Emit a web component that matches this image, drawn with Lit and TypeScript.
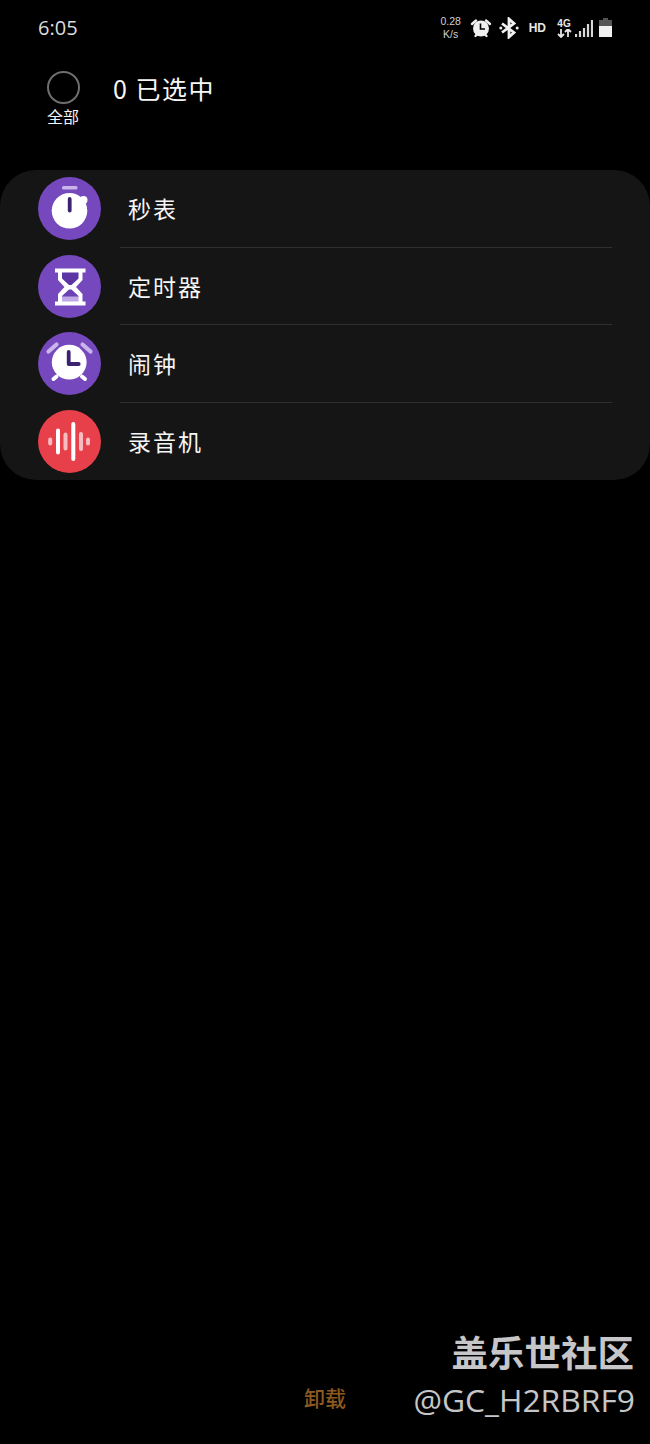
import { LitElement, html, css, svg } from 'lit';
import { customElement } from 'lit/decorators.js';

const PURPLE = '#7548bd';
const RED = '#e8404a';

const stopwatch = svg`
  <circle cx="31.5" cy="31.5" r="31.5" fill="${PURPLE}"/>
  <rect x="24" y="9" width="15.5" height="3.4" rx="1.5" fill="#c9b5ea"/>
  <circle cx="45.5" cy="23" r="4" fill="#fff"/>
  <circle cx="31.5" cy="33.8" r="17.8" fill="#fff"/>
  <rect x="29.8" y="20" width="3.8" height="15.5" rx="1.9" fill="#3c2370"/>`;

const hourglass = svg`
  <circle cx="31.5" cy="31.5" r="31.5" fill="${PURPLE}"/>
  <rect x="17" y="13.500" width="30.5" height="4" fill="#fff"/>
  <rect x="17" y="46.500" width="30.5" height="4" fill="#fff"/>
  <path d="M20 16h24.500v9L38 32l6.500 7v9H20v-9l6.500-7L20 25z" fill="#fff"/>
  <path d="M24 17.500h16.500v6L33.500 30h-2.500L24 23.500z" fill="#5a35a3"/>
  <path d="M31 34.500h2.500l7 6.500v1H24v-1z" fill="#6a42b3"/>
  <rect x="24" y="41.500" width="16.500" height="5" fill="#bfa9e6"/>`;

const alarm = svg`
  <circle cx="31.5" cy="31.5" r="31.5" fill="${PURPLE}"/>
  <path d="M10.500 19.500l8-7M44.500 12.500l8 7" stroke="#c9b5ea" stroke-width="4.200" stroke-linecap="round" fill="none"/>
  <path d="M18.500 44.500l-3 2.500M44 44.500l3 2.500" stroke="#fff" stroke-width="4" stroke-linecap="round" fill="none"/>
  <circle cx="31.200" cy="30.200" r="17.400" fill="#fff"/>
  <path d="M30.700 20v12h10" stroke="#3c2370" stroke-width="3.800" stroke-linecap="round" stroke-linejoin="round" fill="none"/>`;

const recorder = svg`
  <circle cx="31.5" cy="31.5" r="31.5" fill="${RED}"/>
  <g stroke-width="4" stroke-linecap="round" fill="none">
    <path d="M12.200 29.500v4M50 29.500v4M27.500 24.500v14M43 24v15" stroke="#f7bcc0"/>
    <path d="M20 20.500v22M35.300 14v35" stroke="#fff"/>
  </g>`;

const ITEMS = [
  { name: '秒表', icon: stopwatch },
  { name: '定时器', icon: hourglass },
  { name: '闹钟', icon: alarm },
  { name: '录音机', icon: recorder },
];

@customElement('app-root')
export class AppRoot extends LitElement {
  static styles = css`
    :host {
      display: flex;
      flex-direction: column;
      position: relative;
      height: 1444px;
      overflow: hidden;
      background: #000;
      color: #f6f6f6;
      font-family: 'Noto Sans CJK SC', 'Noto Sans', sans-serif;
    }

    .status {
      display: flex;
      align-items: center;
      justify-content: space-between;
      height: 55px;
      padding: 0 38px;
      flex: none;
    }

    .time {
      font-family: 'Open Sans', sans-serif;
      font-size: 20px;
      color: #dcdcdc;
    }

    .indicators {
      display: flex;
      align-items: center;
      color: #e6e6e6;
    }

    .speed {
      display: flex;
      flex-direction: column;
      align-items: center;
      width: 24px;
      font-family: 'Liberation Sans', sans-serif;
      font-size: 10.5px;
      line-height: 12.500px;
      color: #cfcfcf;
    }

    .indicators svg {
      display: block;
      flex: none;
    }

    .hd {
      margin: 0 10px 0 10px;
      font-family: 'Liberation Sans', sans-serif;
      font-size: 12px;
      font-weight: 700;
    }

    .net {
      display: flex;
      flex-direction: column;
      align-items: center;
      width: 16px;
      font-family: 'Liberation Sans', sans-serif;
      font-size: 10px;
      font-weight: 700;
      line-height: 11px;
    }

    .header {
      display: flex;
      height: 115px;
      flex: none;
      padding-left: 46px;
      gap: 33px;
    }

    .all {
      display: flex;
      flex-direction: column;
      align-items: center;
      width: 34px;
      padding-top: 16px;
    }

    .check {
      box-sizing: border-box;
      width: 33px;
      height: 33px;
      border: 2px solid #6e6e6e;
      border-radius: 50%;
    }

    .all span {
      margin-top: 1px;
      font-size: 16px;
      line-height: 22px;
      font-weight: 400;
      white-space: nowrap;
    }

    .title {
      margin-top: 15px;
      font-size: 25px;
      line-height: 36px;
      font-weight: 400;
      letter-spacing: 1.5px;
    }

    .card {
      display: flex;
      flex-direction: column;
      height: 310px;
      flex: none;
      background: #151515;
      border-radius: 36px;
    }

    .row {
      display: flex;
      align-items: center;
      flex: 1;
      padding-left: 38px;
    }

    .row svg {
      display: block;
      flex: none;
      width: 63px;
      height: 63px;
    }

    .label {
      display: flex;
      align-items: center;
      box-sizing: border-box;
      height: 100%;
      flex: 1;
      margin: 0 38px 0 19px;
      padding-left: 8px;
      border-bottom: 1px solid #2f2f2f;
      font-size: 23px;
      font-weight: 400;
      letter-spacing: 2px;
    }

    .row:last-child .label {
      border-bottom: none;
    }

    .actions {
      display: flex;
      justify-content: center;
      margin-top: auto;
      padding-bottom: 31px;
    }

    .actions span {
      font-size: 21px;
      line-height: 32px;
      color: #8c5a20;
      font-weight: 500;
    }

    .watermark {
      position: absolute;
      right: 15px;
      bottom: 22px;
      text-align: right;
      color: #c6c6c8;
    }

    .brand {
      font-size: 36.5px;
      line-height: 52px;
      font-weight: 700;
      margin-right: 1px;
    }

    .handle {
      font-family: 'Open Sans', sans-serif;
      font-size: 31.8px;
      line-height: 44px;
    }
  `;

  render() {
    return html`
      <div class="status">
        <span class="time">6:05</span>
        <div class="indicators">
          <div class="speed"><span>0.28</span><span>K/s</span></div>
          <svg style="margin-left:7px" width="22" height="22" viewBox="0 0 22 22">
            <path d="M2 7l4-3.500M16 3.500L20 7M5.500 19l2-2M16.500 19l-2-2" stroke="#f0f0f0" stroke-width="2.400" stroke-linecap="round"/>
            <circle cx="11" cy="11.500" r="8" fill="#f0f0f0"/>
            <path d="M10.500 6.500v5.500h4.500" stroke="#000" stroke-width="1.600" fill="none"/>
          </svg>
          <svg style="margin-left:7px" width="20" height="22" viewBox="0 0 20 22">
            <path d="M3 6.500L15 15.500 10 20V2l5 4.500L3 15.500" stroke="#f0f0f0" stroke-width="2.800" fill="none"/>
            <circle cx="1.800" cy="11" r="1.500" fill="#f0f0f0"/>
            <circle cx="18.200" cy="11" r="1.500" fill="#f0f0f0"/>
          </svg>
          <span class="hd">HD</span>
          <div class="net">
            <span>4G</span>
            <svg width="15" height="9" viewBox="0 0 15 9">
              <path d="M4 0v8M1 5l3 3 3-3M11 8V0M8 3l3-3 3 3" stroke="#e6e6e6" stroke-width="1.800" fill="none"/>
            </svg>
          </div>
          <svg style="margin-left:3px" width="18" height="18" viewBox="0 0 18 18">
            <path d="M1 15v3M5 12v6M9 9v9M13 5v13M17 1v17" stroke="#d8d8d8" stroke-width="2.200"/>
          </svg>
          <svg style="margin-left:6px" width="13" height="19" viewBox="0 0 13 19">
            <path d="M4 0h5v2h4v7H0V2h4z" fill="#555"/>
            <path d="M0 8h13v11H0z" fill="#f0f0f0"/>
          </svg>
        </div>
      </div>

      <div class="header">
        <div class="all">
          <div class="check"></div>
          <span>全部</span>
        </div>
        <div class="title">0 已选中</div>
      </div>

      <div class="card">
        ${ITEMS.map(
          (item) => html`
            <div class="row">
              <svg viewBox="0 0 63 63">${item.icon}</svg>
              <div class="label">${item.name}</div>
            </div>
          `
        )}
      </div>

      <div class="actions"><span>卸载</span></div>

      <div class="watermark">
        <div class="brand">盖乐世社区</div>
        <div class="handle">@GC_H2RBRF9</div>
      </div>
    `;
  }
}

declare global {
  interface HTMLElementTagNameMap {
    'app-root': AppRoot;
  }
}
